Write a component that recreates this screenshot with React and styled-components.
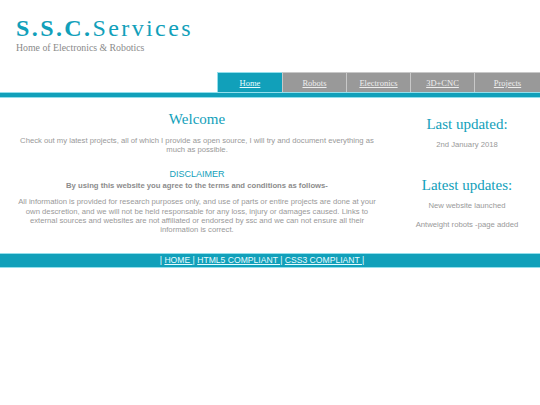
import React from "react"
import styled, { createGlobalStyle } from "styled-components"

const teal = "#11a0ba"
const tealLight = "#93dfec"
const grey = "#999"

const GlobalStyle = createGlobalStyle`
  html, body {
    margin: 0;
    padding: 0;
    background: #fff;
  }
  body {
    font-family: "Liberation Sans", Arial, sans-serif;
  }
`

const Page = styled.div`
  width: 540px;
  min-height: 405px;
  background: #fff;
`

const Header = styled.header`
  padding: 14px 0 0 16px;
`

const Logo = styled.h1`
  margin: 0;
  font-family: "Liberation Serif", "Times New Roman", serif;
  font-size: 24px;
  line-height: 28px;
  font-weight: normal;
  letter-spacing: 2.4px;
  color: ${teal};
  b {
    font-weight: bold;
  }
`

const Tagline = styled.div`
  font-family: "Liberation Serif", "Times New Roman", serif;
  font-size: 9.8px;
  line-height: 12px;
  color: #8a8a8a;
`

const Nav = styled.nav`
  display: flex;
  justify-content: flex-end;
  margin-top: 18px;
`

const Tab = styled.a`
  width: ${({ $first }) => ($first ? 64 : 63)}px;
  height: 19px;
  display: flex;
  align-items: center;
  justify-content: center;
  border: 1px solid ${({ $active }) => ($active ? tealLight : "#c8c8c8")};
  border-bottom: none;
  background: ${({ $active }) => ($active ? teal : grey)};
  color: ${({ $active }) => ($active ? "#e6fbff" : "#eee")};
  font-family: "Liberation Serif", "Times New Roman", serif;
  font-size: 8.5px;
  text-decoration: underline;
  margin-left: ${({ $first }) => ($first ? 0 : "-1px")};
  &:last-child {
    width: 65px;
    border-right: none;
  }
`

const Rule = styled.div`
  height: 4px;
  background: ${teal};
  border-top: 1px solid ${tealLight};
  border-bottom: 1px solid ${tealLight};
`

const Main = styled.main`
  display: grid;
  grid-template-columns: 394px 1fr;
  padding-top: 12px;
`

const Column = styled.section`
  text-align: center;
  padding: 0 ${({ $pad }) => $pad || 0}px;
`

const Heading = styled.h2`
  margin: 0;
  font-family: "Liberation Serif", "Times New Roman", serif;
  font-weight: normal;
  font-size: 15px;
  line-height: 18px;
  color: ${teal};
  margin-top: ${({ $top }) => $top || 0}px;
`

const Text = styled.p`
  margin: ${({ $top }) => $top || 0}px 0 0;
  font-size: 7.7px;
  line-height: 9.4px;
  color: ${grey};
  font-weight: ${({ $bold }) => ($bold ? "bold" : "normal")};
  ${({ $bold }) => $bold && "color: #8c8c8c;"}
`

const SubHeading = styled.h3`
  margin: 14px 0 1px;
  font-size: 9px;
  line-height: 11px;
  font-weight: normal;
  color: ${teal};
`

const Footer = styled.footer`
  margin-top: 18px;
  height: 13px;
  padding-right: 16px;
  background: ${teal};
  border-top: 1px solid ${tealLight};
  border-bottom: 1px solid ${tealLight};
  display: flex;
  align-items: center;
  justify-content: center;
  font-size: 8.6px;
  color: #e6fbff;
  white-space: pre;
`

const FootLink = styled.a`
  color: #e6fbff;
  text-decoration: underline;
`

const tabs = ["Home", "Robots", "Electronics", "3D+CNC", "Projects"]

export default function App() {
  return (
    <Page>
      <GlobalStyle />
      <Header>
        <Logo>
          <b>S.S.C.</b>Services
        </Logo>
        <Tagline>Home of Electronics &amp; Robotics</Tagline>
      </Header>
      <Nav>
        {tabs.map((t, i) => (
          <Tab key={t} $active={i === 0} $first={i === 0}>
            {t}
          </Tab>
        ))}
      </Nav>
      <Rule />
      <Main>
        <Column $pad={16}>
          <Heading>Welcome</Heading>
          <Text $top={8}>
            Check out my latest projects, all of which I provide as open source, I will try and document everything as
            much as possible.
          </Text>
          <SubHeading>DISCLAIMER</SubHeading>
          <Text $bold>By using this website you agree to the terms and conditions as follows-</Text>
          <Text $top={7}>
            All information is provided for research purposes only, and use of parts or entire projects are done at your
            own descretion, and we will not be held responsable for any loss, injury or damages caused. Links to
            external sources and websites are not affiliated or endorsed by ssc and we can not ensure all their
            information is correct.
          </Text>
        </Column>
        <Column>
          <Heading $top={5}>Last updated:</Heading>
          <Text $top={7}>2nd January 2018</Text>
          <Heading $top={27}>Latest updates:</Heading>
          <Text $top={7}>New website launched</Text>
          <Text $top={9}>Antweight robots -page added</Text>
        </Column>
      </Main>
      <Footer>
        {"| "}
        <FootLink>HOME </FootLink>
        {"| "}
        <FootLink>HTML5 COMPLIANT </FootLink>
        {"| "}
        <FootLink>CSS3 COMPLIANT </FootLink>
        {"|"}
      </Footer>
    </Page>
  )
}
